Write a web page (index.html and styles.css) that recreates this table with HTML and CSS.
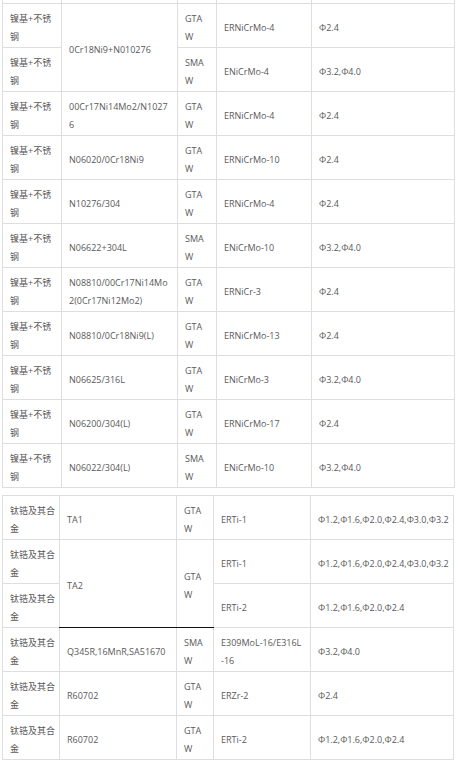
FILE: index.html
```html
<!DOCTYPE html>
<html lang="zh-CN">
<head>
<meta charset="utf-8">
<title>焊材表</title>
<link rel="stylesheet" href="styles.css">
</head>
<body>
<table class="grid t1">
  <colgroup>
    <col class="w1"><col class="w2"><col class="w3"><col class="w4"><col class="w5">
  </colgroup>
  <tbody>
    <tr class="edge"><td></td><td></td><td></td><td></td><td></td></tr>
    <tr><td>镍基+不锈钢</td><td rowspan="2">0Cr18Ni9+N010276</td><td>GTAW</td><td>ERNiCrMo-4</td><td>Φ2.4</td></tr>
    <tr><td>镍基+不锈钢</td><td>SMAW</td><td>ENiCrMo-4</td><td>Φ3.2,Φ4.0</td></tr>
    <tr><td>镍基+不锈钢</td><td>00Cr17Ni14Mo2/N10276</td><td>GTAW</td><td>ERNiCrMo-4</td><td>Φ2.4</td></tr>
    <tr><td>镍基+不锈钢</td><td>N06020/0Cr18Ni9</td><td>GTAW</td><td>ERNiCrMo-10</td><td>Φ2.4</td></tr>
    <tr><td>镍基+不锈钢</td><td>N10276/304</td><td>GTAW</td><td>ERNiCrMo-4</td><td>Φ2.4</td></tr>
    <tr><td>镍基+不锈钢</td><td>N06622+304L</td><td>SMAW</td><td>ENiCrMo-10</td><td>Φ3.2,Φ4.0</td></tr>
    <tr><td>镍基+不锈钢</td><td>N08810/00Cr17Ni14Mo2(0Cr17Ni12Mo2)</td><td>GTAW</td><td>ERNiCr-3</td><td>Φ2.4</td></tr>
    <tr><td>镍基+不锈钢</td><td>N08810/0Cr18Ni9(L)</td><td>GTAW</td><td>ERNiCrMo-13</td><td>Φ2.4</td></tr>
    <tr><td>镍基+不锈钢</td><td>N06625/316L</td><td>GTAW</td><td>ENiCrMo-3</td><td>Φ3.2,Φ4.0</td></tr>
    <tr><td>镍基+不锈钢</td><td>N06200/304(L)</td><td>GTAW</td><td>ERNiCrMo-17</td><td>Φ2.4</td></tr>
    <tr><td>镍基+不锈钢</td><td>N06022/304(L)</td><td>SMAW</td><td>ENiCrMo-10</td><td>Φ3.2,Φ4.0</td></tr>
  </tbody>
</table>

<table class="grid t2">
  <colgroup>
    <col class="w1"><col class="w2"><col class="w3"><col class="w4"><col class="w5">
  </colgroup>
  <tbody>
    <tr><td>钛锆及其合金</td><td>TA1</td><td>GTAW</td><td>ERTi-1</td><td>Φ1.2,Φ1.6,Φ2.0,Φ2.4,Φ3.0,Φ3.2</td></tr>
    <tr><td>钛锆及其合金</td><td rowspan="2" class="dark">TA2</td><td rowspan="2" class="dark">GTAW</td><td>ERTi-1</td><td>Φ1.2,Φ1.6,Φ2.0,Φ2.4,Φ3.0,Φ3.2</td></tr>
    <tr><td>钛锆及其合金</td><td>ERTi-2</td><td>Φ1.2,Φ1.6,Φ2.0,Φ2.4</td></tr>
    <tr><td>钛锆及其合金</td><td class="dtop">Q345R,16MnR,SA51670</td><td class="dtop">SMAW</td><td>E309MoL-16/E316L<wbr>-16</td><td>Φ3.2,Φ4.0</td></tr>
    <tr><td>钛锆及其合金</td><td>R60702</td><td>GTAW</td><td>ERZr-2</td><td>Φ2.4</td></tr>
    <tr><td>钛锆及其合金</td><td>R60702</td><td>GTAW</td><td>ERTi-2</td><td>Φ1.2,Φ1.6,Φ2.0,Φ2.4</td></tr>
    <tr class="edge tail"><td></td><td></td><td></td><td></td><td></td></tr>
  </tbody>
</table>
</body>
</html>
```

FILE: styles.css
```css
html, body {
  margin: 0;
  padding: 0;
  background: #ffffff;
}

body {
  font-family: "Open Sans", "Noto Sans CJK SC", sans-serif;
  font-size: 9px;
  line-height: 18px;
  color: #595959;
}

.grid {
  border-collapse: collapse;
  table-layout: fixed;
  margin-left: 2px;
}

.grid td {
  border: 1px solid #dedede;
  padding: 6px 7px 1px 7px;
  vertical-align: middle;
  word-break: break-all;
  text-align: left;
}

.grid td:first-child {
  padding-right: 3px;
}

.grid td:last-child {
  padding-right: 0;
}

.t1 { width: 453px; }
.t1 .w1 { width: 59px; }
.t1 .w2 { width: 116px; }
.t1 .w3 { width: 39px; }
.t1 .w4 { width: 95px; }
.t1 .w5 { width: 143px; }

.t2 {
  width: 452px;
  margin-top: 7px;
}
.t2 .w1 { width: 57px; }
.t2 .w2 { width: 117px; }
.t2 .w3 { width: 37px; }
.t2 .w4 { width: 97px; }
.t2 .w5 { width: 143px; }

.grid .edge td {
  height: 3px;
  padding: 0;
  line-height: 0;
  border-top: none;
}

.grid .tail td {
  border-bottom: none;
}

.grid td.dark {
  border-bottom-color: #111111;
}

.grid td.dtop {
  border-top-color: #111111;
}
```
